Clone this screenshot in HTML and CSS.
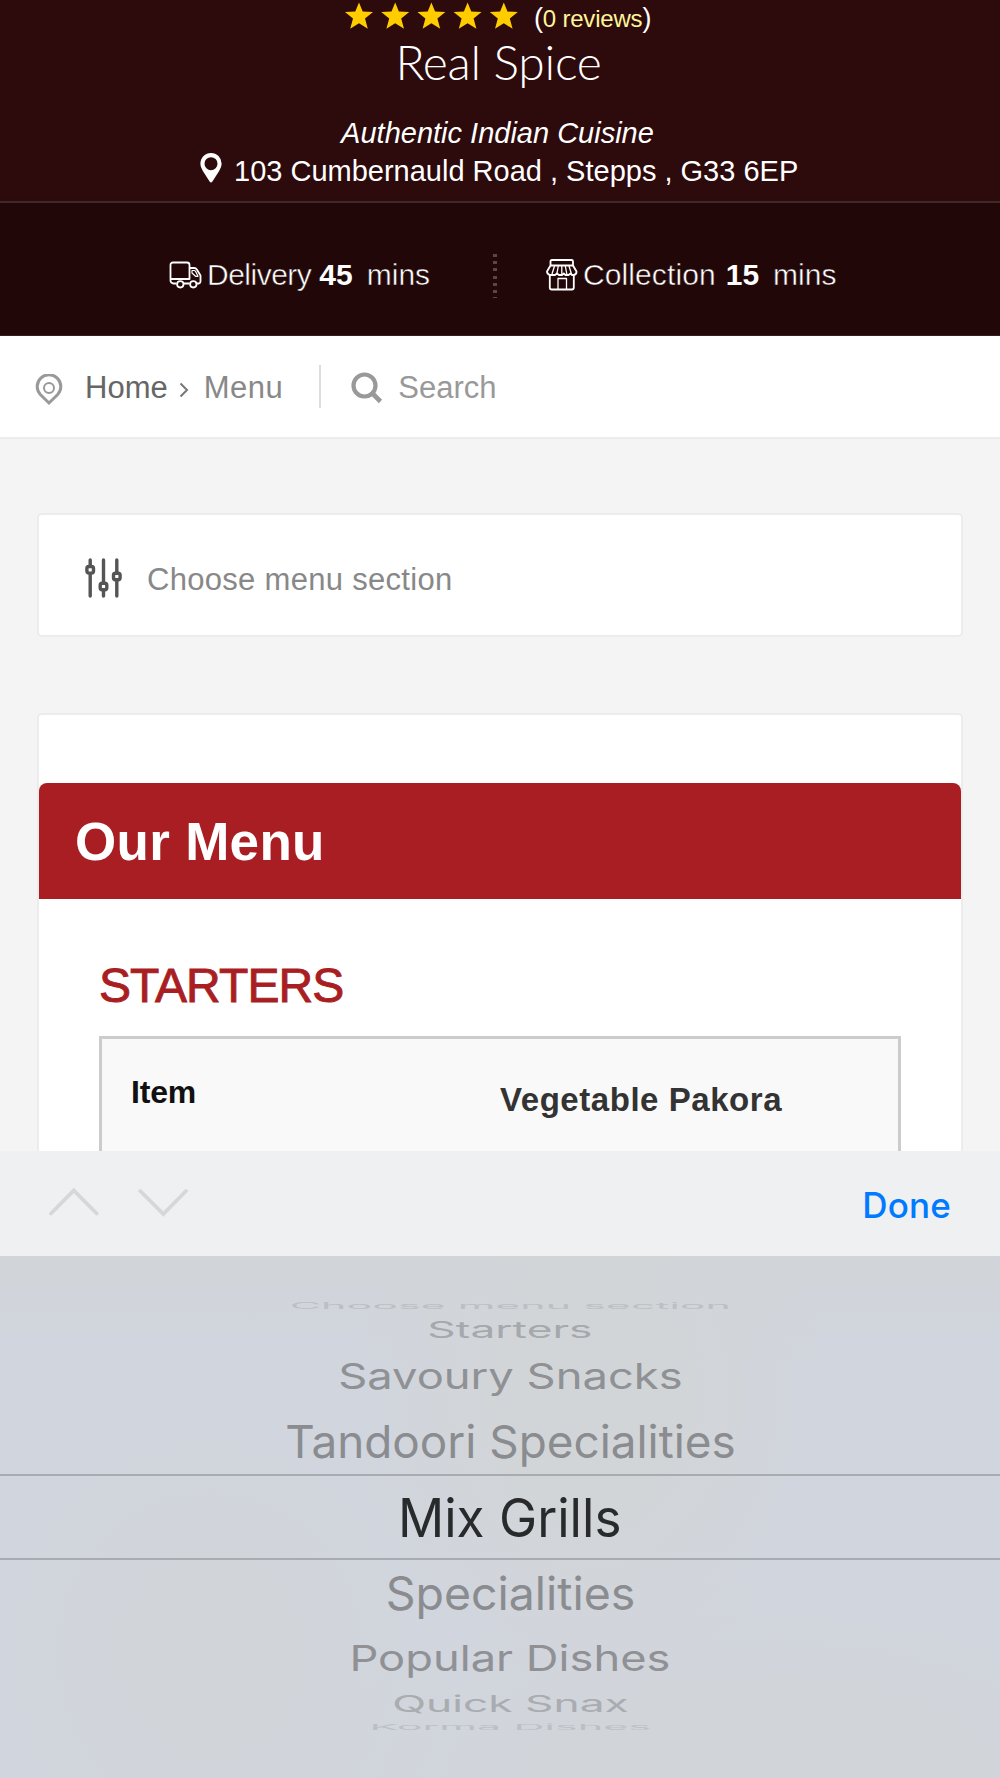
FILE: index.html
```html
<!DOCTYPE html>
<html lang="en">

<head>
    <meta charset="UTF-8">
    <title>Real Spice | Menu</title>
    <link rel="stylesheet" href="styles.css">
</head>

<body>
    <header class="hero">
        <div class="rating">
            <svg class="stars" width="174" height="30" viewBox="0 0 174 30" fill="#ffcc00">
                <defs>
                    <path id="star" d="M14 1.500l3.700 9.100 10.300.5-8 6.300 2.800 10.400-8.800-5.600-8.800 5.600L8 17.400l-8-6.300 10.300-.5z" />
                </defs>
                <use href="#star" />
                <use href="#star" x="36.2" />
                <use href="#star" x="72.4" />
                <use href="#star" x="108.6" />
                <use href="#star" x="144.8" />
            </svg>
            <span class="reviews">(<a class="reviews-link">0 reviews</a>)</span>
        </div>
        <h1 class="name">Real Spice</h1>
        <p class="tagline">Authentic Indian Cuisine</p>
        <p class="address">
            <svg class="pin" width="22" height="30" viewBox="0 0 22 30">
                <path fill="#fff" fill-rule="evenodd" d="M11 0a10.6 10.6 0 0 1 10.6 10.6c0 3.400-1.200 5-2.600 7.700L12.400 28.600q-1.400 1.800-2.800 0L3 18.300C1.600 15.600.4 14 .4 10.600A10.600 10.600 0 0 1 11 0zm0 4.200a6.500 6.500 0 1 0 0 13 6.500 6.500 0 0 0 0-13z" />
            </svg>
            <span>103 Cumbernauld Road , Stepps , G33 6EP</span>
        </p>
    </header>

    <section class="times">
        <div class="time">
            <svg width="33" height="28" viewBox="0 0 33 28" fill="none" stroke="#fff" stroke-width="1.8" stroke-linejoin="round">
                <path d="M7.500 22.500H4.500a3 3 0 0 1-3-3V4a2.500 2.500 0 0 1 2.500-2.500h14A2.500 2.500 0 0 1 20.500 4v14H2M15 22.500h5.500M20.500 7H25q2 0 3 1.700l3.500 5.800v6q0 1.500-1.500 2H28" />
                <path stroke-width="1.200" d="M23 9.500h2q1 0 1.500.8l2.500 5h-2.500L23 12z" />
                <circle cx="11.300" cy="23.300" r="3.200" />
                <circle cx="24.300" cy="23.300" r="3.200" />
            </svg>
            <span class="time-label delivery">Delivery</span>
            <strong>45</strong>
            <span class="time-label">mins</span>
        </div>
        <div class="dots"></div>
        <div class="time">
            <svg width="32" height="33" viewBox="0 0 32 33" fill="none" stroke="#fff" stroke-width="1.800" stroke-linejoin="round">
                <path d="M4.500 7.500V3.500q0-1.500 1.500-1.500h19.500q1.500 0 1.500 1.500v4M4.500 7.500h22.500l3.500 6q.3 3-3 3.500h-1.500l-1.500-1.500-2 1.500h-3l-1.700-1.500-1.800 1.500h-3L11 15.500 9 17H4Q1 16 1 13.500z" />
                <path d="M3.800 17v12.500q0 2 2 2h20q2 0 2-2V17" />
                <path stroke-width="1.300" d="M8.500 8L6 16M12.300 8l-1.500 8M15.800 8v8M19.300 8l1.500 8M23 8l2.500 8M12 31.500V20.500h8.500v11" />
            </svg>
            <span class="time-label collection">Collection</span>
            <strong>15</strong>
            <span class="time-label">mins</span>
        </div>
    </section>

    <nav class="crumbs">
        <svg class="crumb-pin" width="28" height="32" viewBox="0 0 28 32" fill="none" stroke="#999">
            <path stroke-width="3" d="M14 29L5.300 20.500a11.800 11.800 0 1 1 17.400 0z" />
            <circle cx="14" cy="14" r="5" stroke-width="2" />
        </svg>
        <a class="crumb-home">Home</a>
        <svg class="crumb-arrow" width="10" height="16" viewBox="0 0 10 16" fill="none" stroke="#777" stroke-width="2">
            <path d="M1.500 1.500L8 8l-6.500 6.500" />
        </svg>
        <a class="crumb-menu">Menu</a>
        <span class="divider"></span>
        <svg class="loupe" width="32" height="32" viewBox="0 0 32 32" fill="none" stroke="#999">
            <circle cx="13.500" cy="13.500" r="11" stroke-width="4.200" />
            <path d="M20.500 20.500l9 9" stroke-width="4.600" />
        </svg>
        <span class="search">Search</span>
    </nav>

    <main class="content">
        <div class="chooser">
            <svg width="38" height="40" viewBox="0 0 38 40" fill="#fff" stroke="#555" stroke-width="3.400" stroke-linecap="round">
                <path d="M5.200 2v36M18.500 2v36M31.800 2v36" />
                <rect x="1.900" y="8.500" width="6.600" height="6.600" rx="2" />
                <rect x="15.200" y="25.200" width="6.600" height="6.600" rx="2" />
                <rect x="28.500" y="15.200" width="6.600" height="6.600" rx="2" />
            </svg>
            <span>Choose menu section</span>
        </div>

        <section class="menu-card">
            <h2 class="menu-title">Our Menu</h2>
            <h3 class="category">STARTERS</h3>
            <div class="item-table">
                <div class="item-label">Item</div>
                <div class="item-name">Vegetable Pakora</div>
            </div>
        </section>
    </main>

    <!-- section picker -->
    <div class="picker-bar">
        <svg class="arrows" width="140" height="30" viewBox="0 0 140 30" fill="none" stroke="#d6d7d8" stroke-width="3.800" stroke-linecap="round">
            <path d="M3 26.500L25.800 3.500 48.700 26.500M92.300 4L115.300 27 138 4" />
        </svg>
        <span class="done">Done</span>
    </div>
    <ul class="picker">
        <li class="row edge-top"><span>Choose menu section</span></li>
        <li class="row far-top"><span>Starters</span></li>
        <li class="row mid-top"><span>Savoury Snacks</span></li>
        <li class="row near-top"><span>Tandoori Specialities</span></li>
        <li class="row selected"><span>Mix Grills</span></li>
        <li class="row near-bottom"><span>Specialities</span></li>
        <li class="row mid-bottom"><span>Popular Dishes</span></li>
        <li class="row far-bottom"><span>Quick Snax</span></li>
        <li class="row edge-bottom"><span>Korma Dishes</span></li>
    </ul>
</body>

</html>
```
FILE: styles.css
```css
* {
    box-sizing: border-box;
}

body {
    width: 1000px;
    height: 1778px;
    margin: 0;
    overflow: hidden;
    font-family: "Liberation Sans", Arial, sans-serif;
    background: #f4f4f4;
}

h1, h2, h3, p, ul {
    margin: 0;
    padding: 0;
}

svg {
    flex: none;
}

span, a, strong {
    white-space: nowrap;
}

/* header */
.hero {
    height: 203px;
    color: #fff;
    text-align: center;
    background: #2d0a0b;
    border-bottom: 2px solid #40272a;
}

.rating {
    display: flex;
    height: 36px;
    padding-left: 345px;
}

.stars {
    margin-top: 1px;
}

.reviews {
    margin-left: 15px;
    font-size: 27px;
    line-height: 36px;
    letter-spacing: -.2px;
}

.reviews-link {
    font-size: 24px;
    color: #fff59a;
}

.name {
    height: 78px;
    padding-right: 3px;
    font-family: Lato, sans-serif;
    font-size: 48px;
    font-weight: 300;
    line-height: 52px;
    letter-spacing: -.3px;
}

.tagline {
    height: 38px;
    padding-right: 5px;
    font-size: 29px;
    font-style: italic;
    line-height: 38px;
}

.address {
    display: flex;
    gap: 12px;
    padding-left: 200px;
    font-size: 29px;
    line-height: 38px;
}

.pin {
    margin-top: 1px;
}

.times {
    display: flex;
    height: 133px;
    padding-left: 169px;
    color: #fff;
    background: #220709;
    border-bottom: 1px solid #3b1b1e;
}

.time {
    display: flex;
    align-items: center;
    width: 324px;
    height: 143px;
    font-size: 30px;
}

.time:last-child {
    padding-left: 48px;
}

.time-label {
    -webkit-text-stroke: .5px #220709;
}

.time strong {
    margin: 0 14px 0 8px;
}

.delivery {
    margin-left: 5px;
    letter-spacing: -.5px;
}

.collection {
    margin-left: 5px;
    margin-right: 2px;
    letter-spacing: .1px;
}

.dots {
    width: 5px;
    height: 44px;
    margin-top: 51px;
    background: repeating-linear-gradient(#5c4547 0 3px, transparent 3px 7.200px);
    border-right: 1px solid #220709;
}

/* breadcrumbs */
.crumbs {
    display: flex;
    align-items: center;
    height: 103px;
    padding-left: 35px;
    font-size: 31px;
    color: #888;
    background: #fff;
    border-bottom: 2px solid #ececec;
}

.crumb-pin {
    margin-top: 6px;
}

.crumb-home {
    margin: 3px 0 0 22px;
    color: #666;
}

.crumb-arrow {
    margin: 6px 15px 0 11px;
}

.crumb-menu {
    margin-top: 3px;
    letter-spacing: .5px;
}

.divider {
    width: 2px;
    height: 43px;
    margin: 0 30px 0 36px;
    background: #ddd;
}

.loupe {
    margin-top: 2px;
}

.search {
    margin: 3px 0 0 15px;
    color: #999;
}

/* page content */
.content {
    height: 712px;
    padding: 74px 37px 0;
    overflow: hidden;
}

.chooser {
    display: flex;
    gap: 24px;
    height: 124px;
    padding: 43px 0 0 46px;
    font-size: 31px;
    line-height: 43px;
    letter-spacing: .3px;
    color: #888;
    background: #fff;
    border: 2px solid #ececec;
    border-radius: 5px;
}

.menu-card {
    height: 600px;
    margin-top: 76px;
    padding-top: 68px;
    background: #fff;
    border: 2px solid #ececec;
    border-radius: 5px;
}

.menu-title {
    height: 116px;
    padding-left: 36px;
    font-size: 53px;
    line-height: 118px;
    letter-spacing: .3px;
    color: #fff;
    background: #a91e22;
    border-radius: 8px 8px 0 0;
}

.category {
    padding: 59px 0 0 60px;
    font-size: 48px;
    font-weight: normal;
    line-height: 56px;
    letter-spacing: -.9px;
    color: #a91e22;
    -webkit-text-stroke: .9px #a91e22;
}

.item-table {
    display: flex;
    width: 802px;
    height: 300px;
    margin: 22px 0 0 60px;
    font-weight: bold;
    background: #f9f9f9;
    border: 3px solid #ccc;
}

.item-label {
    width: 369px;
    padding: 35px 0 0 29px;
    font-size: 32px;
    letter-spacing: -.2px;
    color: #111;
}

.item-name {
    padding: 42px 0 0 29px;
    font-size: 33px;
    letter-spacing: .55px;
    color: #333;
}

/* picker */
.picker-bar {
    display: flex;
    align-items: center;
    justify-content: space-between;
    height: 105px;
    padding: 0 49px 0 48px;
    font-family: Inter, sans-serif;
    background: #eef0f2;
}

.arrows {
    margin-bottom: 4px;
}

.done {
    margin-top: 2px;
    font-size: 35px;
    font-weight: 500;
    letter-spacing: .2px;
    color: #007aff;
}

.picker {
    height: 522px;
    padding: 42px 0 0 20px;
    font-family: Inter, sans-serif;
    font-size: 53px;
    color: #8a8c90;
    background:
        radial-gradient(ellipse 240px 300px at 590px 140px, #d2d5d8 40%, transparent),
        radial-gradient(ellipse 260px 280px at 210px 400px, #d1d5d9 10%, transparent),
        radial-gradient(ellipse 460px 200px at 760px 520px, #d1d5d9 30%, transparent),
        linear-gradient(#d1d5d9, transparent 110px),
        #d1d5de;
}

.row {
    display: flex;
    align-items: center;
    justify-content: center;
    line-height: 1;
}

.edge-top {
    height: 16px;
    color: #bcbfc4;
}

.edge-top span {
    transform: scale(.81, .16);
}

.far-top {
    height: 30px;
    color: #a5a8ac;
}

.far-top span {
    padding-top: 2px;
    transform: scale(.835, .42);
}

.mid-top {
    height: 64px;
    color: #8f9195;
}

.mid-top span {
    transform: scale(.855, .67);
}

.near-top {
    height: 66px;
}

.near-top span {
    padding-top: 2px;
    transform: scale(.865, .86);
}

.selected {
    height: 86px;
    margin-left: -20px;
    padding-left: 20px;
    color: #292a2c;
    border-top: 2px solid #a8abaf;
    border-bottom: 2px solid #a8abaf;
}

.selected span {
    padding-top: 2px;
    transform: scaleX(.966);
}

.near-bottom {
    height: 66px;
}

.near-bottom span {
    padding-top: 1px;
    transform: scale(.876, .87);
}

.mid-bottom {
    height: 65px;
    color: #8f9195;
}

.mid-bottom span {
    transform: scale(.854, .67);
}

.far-bottom {
    height: 26px;
    color: #a9acb0;
}

.far-bottom span {
    padding-top: 3px;
    transform: scale(.836, .42);
}

.edge-bottom {
    height: 20px;
    color: #bcbfc4;
}

.edge-bottom span {
    transform: scale(.813, .14);
}
```
